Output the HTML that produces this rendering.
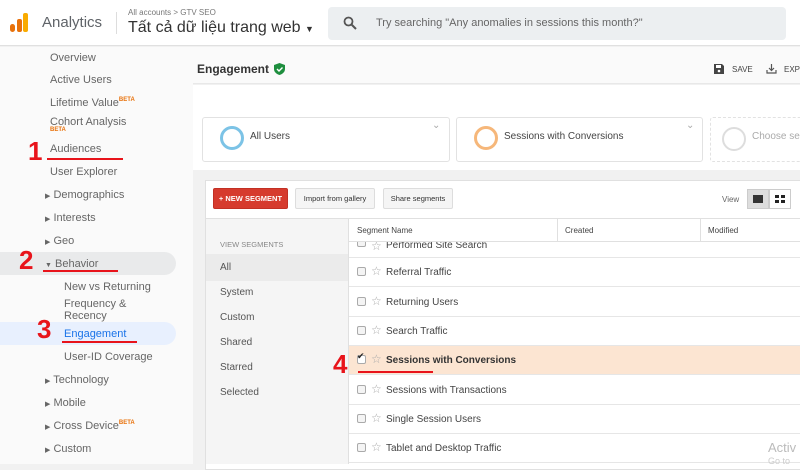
<!DOCTYPE html>
<html><head><meta charset="utf-8"><style>
*{margin:0;padding:0;box-sizing:border-box}
body{width:800px;height:464px;overflow:hidden;background:#f1f1f1;font-family:"Liberation Sans",sans-serif;color:#555;position:relative}
.a{position:absolute;white-space:nowrap}
.sb{font-size:11px;color:#666}
.red{color:#e8141b;font-weight:bold;font-size:26px;font-family:"Liberation Sans",sans-serif}
.ul{position:absolute;height:2px;background:#e8141b}
.beta{font-size:6px;color:#e8710a;font-weight:bold;vertical-align:top}
.tri{font-size:7px;color:#666}
.row{position:absolute;left:349px;width:451px;height:29px;border-bottom:1px solid #e6e6e6;background:#fff;font-size:10px;color:#444}
.row .cb{position:absolute;left:8px;top:9px;width:9px;height:9px;border:1px solid #aaa;border-radius:2px;background:#f4f4f4}
.row .st{position:absolute;left:22px;top:6px;color:#aaa;font-size:12px}
.row .t{position:absolute;left:37px;top:9px}
.vs{position:absolute;left:220px;font-size:10px;color:#555}
</style></head><body>
<!-- header -->
<div class="a" style="left:0;top:0;width:800px;height:46px;background:#fff;border-bottom:1px solid #e0e0e0"></div>
<div class="a" style="left:10px;top:24px;width:5px;height:8px;background:#e8710a;border-radius:3px"></div>
<div class="a" style="left:17px;top:19px;width:5px;height:13px;background:#e8710a;border-radius:2px"></div>
<div class="a" style="left:23px;top:13px;width:5px;height:19px;background:#f9ab00;border-radius:2px"></div>
<div class="a" style="left:42px;top:14px;font-size:15px;color:#5f6368">Analytics</div>
<div class="a" style="left:116px;top:12px;width:1px;height:22px;background:#ddd"></div>
<div class="a" style="left:128px;top:8px;font-size:8px;color:#777">All accounts &gt; GTV SEO</div>
<div class="a" style="left:128px;top:19px;font-size:16px;color:#333">Tất cả dữ liệu trang web <span style="font-size:9px">▼</span></div>
<div class="a" style="left:328px;top:7px;width:458px;height:33px;background:#eceff1;border-radius:4px"></div>
<svg class="a" style="left:343px;top:16px" width="14" height="14" viewBox="0 0 14 14"><circle cx="5.5" cy="5.5" r="4" fill="none" stroke="#555" stroke-width="1.8"/><path d="M8.5 8.5L13 13" stroke="#555" stroke-width="2"/></svg>
<div class="a" style="left:376px;top:17px;font-size:11px;color:#666">Try searching "Any anomalies in sessions this month?"</div>
<!-- sidebar -->
<div class="a" style="left:0;top:47px;width:193px;height:417px;background:#fafafa"></div>
<div class="a" style="left:0;top:252px;width:176px;height:23px;background:#e9eaeb;border-radius:0 12px 12px 0"></div>
<div class="a" style="left:0;top:322px;width:176px;height:23px;background:#e8f0fe;border-radius:0 12px 12px 0"></div>
<div class="a sb" style="left:50px;top:52px">Overview</div>
<div class="a sb" style="left:50px;top:74px">Active Users</div>
<div class="a sb" style="left:50px;top:97px">Lifetime Value<span class="beta">BETA</span></div>
<div class="a sb" style="left:50px;top:116px">Cohort Analysis</div>
<div class="a beta" style="left:50px;top:127px">BETA</div>
<div class="a sb" style="left:50px;top:143px">Audiences</div>
<div class="a sb" style="left:50px;top:166px">User Explorer</div>
<div class="a sb" style="left:45px;top:189px"><span class="tri">▶</span> Demographics</div>
<div class="a sb" style="left:45px;top:212px"><span class="tri">▶</span> Interests</div>
<div class="a sb" style="left:45px;top:235px"><span class="tri">▶</span> Geo</div>
<div class="a sb" style="left:45px;top:258px"><span class="tri">▼</span> Behavior</div>
<div class="a sb" style="left:64px;top:281px">New vs Returning</div>
<div class="a sb" style="left:64px;top:298px">Frequency &amp;</div>
<div class="a sb" style="left:64px;top:310px">Recency</div>
<div class="a sb" style="left:64px;top:328px;color:#1a73e8">Engagement</div>
<div class="a sb" style="left:64px;top:351px">User-ID Coverage</div>
<div class="a sb" style="left:45px;top:374px"><span class="tri">▶</span> Technology</div>
<div class="a sb" style="left:45px;top:397px"><span class="tri">▶</span> Mobile</div>
<div class="a sb" style="left:45px;top:420px"><span class="tri">▶</span> Cross Device<span class="beta">BETA</span></div>
<div class="a sb" style="left:45px;top:443px"><span class="tri">▶</span> Custom</div>
<div class="a red" style="left:28px;top:136px">1</div><div class="ul" style="left:47px;top:158px;width:76px"></div>
<div class="a red" style="left:19px;top:245px">2</div><div class="ul" style="left:43px;top:270px;width:75px"></div>
<div class="a red" style="left:37px;top:314px">3</div><div class="ul" style="left:62px;top:341px;width:75px"></div>
<!-- main top -->
<div class="a" style="left:193px;top:47px;width:607px;height:37px;background:#fafafa;border-bottom:1px solid #e8e8e8"></div>
<div class="a" style="left:197px;top:62px;font-size:12px;font-weight:bold;color:#333">Engagement</div>
<svg class="a" style="left:274px;top:63px" width="11" height="12" viewBox="0 0 11 12"><path d="M5.5 0L11 2v4c0 3-2.5 5-5.5 6C2.5 11 0 9 0 6V2z" fill="#1e8e3e"/><path d="M3 6l2 2 3.5-3.5" stroke="#fff" stroke-width="1.4" fill="none"/></svg>
<svg class="a" style="left:714px;top:64px" width="10" height="10" viewBox="0 0 10 10"><path d="M0 0h8l2 2v8H0z" fill="#444"/><rect x="2" y="1" width="5" height="3" fill="#fff"/><circle cx="5" cy="7" r="1.3" fill="#fff"/></svg>
<div class="a" style="left:732px;top:65px;font-size:8px;color:#444">SAVE</div>
<svg class="a" style="left:766px;top:64px" width="11" height="10" viewBox="0 0 11 10"><path d="M5.5 0v6M3 4l2.5 2.5L8 4M1 6v3h9V6" stroke="#555" fill="none" stroke-width="1.2"/></svg>
<div class="a" style="left:784px;top:65px;font-size:8px;color:#444">EXPO</div>
<div class="a" style="left:193px;top:85px;width:607px;height:85px;background:#fff"></div>
<div class="a" style="left:202px;top:117px;width:248px;height:45px;border:1px solid #e2e2e2;border-radius:3px;background:#fff"></div>
<div class="a" style="left:220px;top:126px;width:24px;height:24px;border:3px solid #7cc3e6;border-radius:50%"></div>
<div class="a" style="left:250px;top:131px;font-size:10px;color:#444">All Users</div>
<div class="a" style="left:432px;top:120px;font-size:10px;color:#aaa">⌄</div>
<div class="a" style="left:456px;top:117px;width:247px;height:45px;border:1px solid #e2e2e2;border-radius:3px;background:#fff"></div>
<div class="a" style="left:474px;top:126px;width:24px;height:24px;border:3px solid #f6b77a;border-radius:50%"></div>
<div class="a" style="left:504px;top:131px;font-size:10px;color:#444">Sessions with Conversions</div>
<div class="a" style="left:686px;top:120px;font-size:10px;color:#aaa">⌄</div>
<div class="a" style="left:710px;top:117px;width:95px;height:45px;border:1px dashed #e2e2e2;border-radius:3px"></div>
<div class="a" style="left:722px;top:127px;width:24px;height:24px;border:2px solid #ddd;border-radius:50%"></div>
<div class="a" style="left:752px;top:131px;font-size:10px;color:#aaa">Choose se</div>
<!-- segment panel -->
<div class="a" style="left:205px;top:180px;width:600px;height:290px;background:#fff;border:1px solid #e0e0e0"></div>
<div class="a" style="left:213px;top:188px;width:75px;height:21px;background:#d63b2e;border:1px solid #c23024;border-radius:2px;color:#fff;font-size:7.5px;font-weight:bold;text-align:center;line-height:19px">+ NEW SEGMENT</div>
<div class="a" style="left:295px;top:188px;width:80px;height:21px;background:#f5f5f5;border:1px solid #ddd;border-radius:2px;font-size:7.5px;color:#333;text-align:center;line-height:19px">Import from gallery</div>
<div class="a" style="left:383px;top:188px;width:70px;height:21px;background:#f5f5f5;border:1px solid #ddd;border-radius:2px;font-size:7.5px;color:#333;text-align:center;line-height:19px">Share segments</div>
<div class="a" style="left:722px;top:195px;font-size:8px;color:#666">View</div>
<div class="a" style="left:747px;top:189px;width:22px;height:20px;background:#ddd;border:1px solid #ccc"></div>
<div class="a" style="left:753px;top:195px;width:10px;height:8px;background:#333"></div>
<div class="a" style="left:769px;top:189px;width:22px;height:20px;background:#fff;border:1px solid #ccc"></div>
<div class="a" style="left:775px;top:195px;width:4px;height:3px;background:#222;box-shadow:6px 0 #222,0 5px #222,6px 5px #222"></div>
<div class="a" style="left:206px;top:218px;width:143px;height:246px;background:#f5f5f5;border-top:1px solid #e0e0e0;border-right:1px solid #e0e0e0"></div>
<div class="a" style="left:206px;top:254px;width:142px;height:27px;background:#ebebeb"></div>
<div class="a" style="left:220px;top:240px;font-size:7.5px;color:#888">VIEW SEGMENTS</div>
<div class="vs" style="top:262px">All</div>
<div class="vs" style="top:287px">System</div>
<div class="vs" style="top:312px">Custom</div>
<div class="vs" style="top:337px">Shared</div>
<div class="vs" style="top:362px">Starred</div>
<div class="vs" style="top:387px">Selected</div>
<div class="a" style="left:349px;top:218px;width:451px;height:24px;background:#fff;border-top:1px solid #e0e0e0;border-bottom:1px solid #e0e0e0"></div>
<div class="a" style="left:557px;top:218px;width:1px;height:24px;background:#e0e0e0"></div>
<div class="a" style="left:700px;top:218px;width:1px;height:24px;background:#e0e0e0"></div>
<div class="a" style="left:357px;top:226px;font-size:8px;color:#444">Segment Name</div>
<div class="a" style="left:565px;top:226px;font-size:8px;color:#444">Created</div>
<div class="a" style="left:708px;top:226px;font-size:8px;color:#444">Modified</div>
<div class="row" style="top:242px;height:16px;overflow:hidden"><div class="cb" style="top:-4px"></div><div class="st" style="top:-3px">☆</div><div class="t" style="top:-2px">Performed Site Search</div></div>
<div class="row" style="top:258px"><div class="cb"></div><div class="st">☆</div><div class="t">Referral Traffic</div></div>
<div class="row" style="top:288px"><div class="cb"></div><div class="st">☆</div><div class="t">Returning Users</div></div>
<div class="row" style="top:317px"><div class="cb"></div><div class="st">☆</div><div class="t">Search Traffic</div></div>
<div class="row" style="top:346px;background:#fce5d2"><div class="cb" style="background:#fff"></div><div class="a" style="left:8px;top:5px;font-size:9px;color:#222">✔</div><div class="st">☆</div><div class="t" style="font-weight:bold;color:#333">Sessions with Conversions</div></div>
<div class="row" style="top:376px"><div class="cb"></div><div class="st">☆</div><div class="t">Sessions with Transactions</div></div>
<div class="row" style="top:405px"><div class="cb"></div><div class="st">☆</div><div class="t">Single Session Users</div></div>
<div class="row" style="top:434px"><div class="cb"></div><div class="st">☆</div><div class="t">Tablet and Desktop Traffic</div></div>
<div class="a red" style="left:333px;top:349px">4</div><div class="ul" style="left:358px;top:371px;width:75px"></div>
<div class="a" style="left:768px;top:440px;font-size:13px;color:#bbb">Activ</div>
<div class="a" style="left:768px;top:456px;font-size:9px;color:#ccc">Go to</div>
</body></html>
